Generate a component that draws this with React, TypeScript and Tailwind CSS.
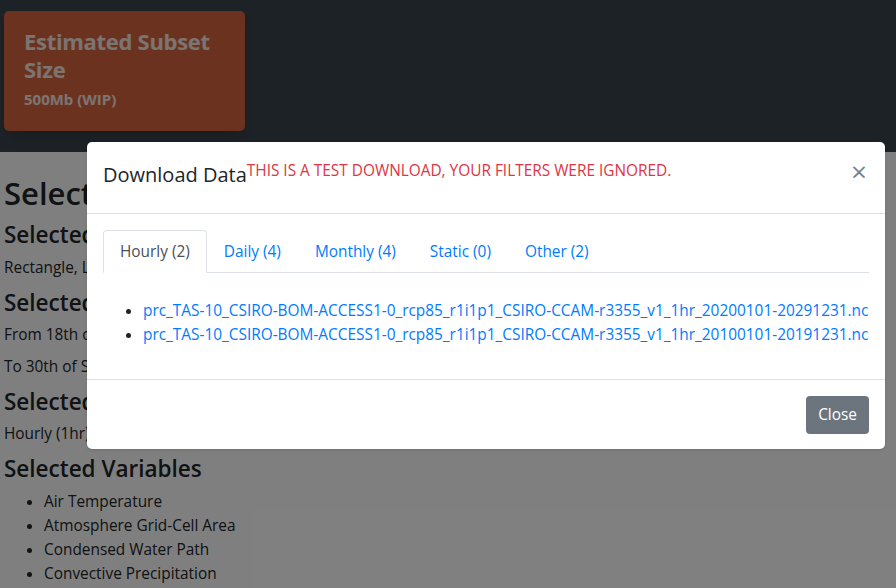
import React from "react";

const files = [
  "prc_TAS-10_CSIRO-BOM-ACCESS1-0_rcp85_r1i1p1_CSIRO-CCAM-r3355_v1_1hr_20200101-20291231.nc",
  "prc_TAS-10_CSIRO-BOM-ACCESS1-0_rcp85_r1i1p1_CSIRO-CCAM-r3355_v1_1hr_20100101-20191231.nc",
];

const tabs = ["Hourly (2)", "Daily (4)", "Monthly (4)", "Static (0)", "Other (2)"];

const variables = [
  "Air Temperature",
  "Atmosphere Grid-Cell Area",
  "Condensed Water Path",
  "Convective Precipitation",
];

export default function App() {
  return (
    <div
      className="relative w-[896px] h-[588px] overflow-hidden bg-white text-[#212529]"
      style={{ fontFamily: '"Open Sans", "Noto Sans", sans-serif' }}
    >
      {/* top bar */}
      <div className="h-[152px] bg-[#3a444f] pl-1 pt-[11px]">
        <div className="w-[241px] h-[120px] rounded-[5px] bg-[#d6663f] shadow-lg px-5 pt-[16px] text-white/85">
          <h3 className="text-[22px] leading-[28px] font-bold tracking-[-0.3px]">Estimated Subset Size</h3>
          <p className="mt-[5px] text-[15px] leading-[22px] font-bold">500Mb (WIP)</p>
        </div>
      </div>

      {/* page content */}
      <div className="pl-1 pt-[22px]">
        <h2 className="text-[31px] leading-[38px] font-semibold mb-2">Selected Filters</h2>
        <h4 className="text-[22.5px] leading-[29px] font-semibold mb-[7px]">Selected Area</h4>
        <p className="text-[15.4px] leading-[24px] mb-2">Rectangle, Lat -43.6 to -39.2, Lon 143.8 to 148.5</p>
        <h4 className="text-[22.5px] leading-[29px] font-semibold mb-[6px]">Selected Dates</h4>
        <p className="text-[15.4px] leading-[24px] mb-2">From 18th of September 2010</p>
        <p className="text-[15.4px] leading-[24px] mb-2">To 30th of September 2029</p>
        <h4 className="mt-px text-[22.5px] leading-[29px] font-semibold mb-[6px]">Selected Frequency</h4>
        <p className="text-[15.4px] leading-[24px] mb-2">Hourly (1hr)</p>
        <h4 className="mt-px text-[22.5px] leading-[29px] font-semibold mb-[7px]">Selected Variables</h4>
        <ul className="list-disc pl-10 text-[15.4px] leading-[24px]">
          {variables.map((v) => (
            <li key={v}>{v}</li>
          ))}
        </ul>
      </div>

      {/* backdrop */}
      <div className="absolute inset-0 bg-black/50" />

      {/* modal */}
      <div className="absolute left-[87px] top-[142px] w-[798px] bg-white rounded-[5px] shadow-sm">
        <div className="h-[72px] border-b border-[#dee2e6] flex items-start px-4 pt-4">
          <h5 className="mt-[2px] text-[20px] leading-[30px] font-medium text-[#212529]">
            Download Data
            <span className="relative -top-px align-top text-[15.4px] leading-[24px] font-normal text-[#dc3545]">
              THIS IS A TEST DOWNLOAD, YOUR FILTERS WERE IGNORED.
            </span>
          </h5>
          <button className="ml-auto mr-[2px] -mt-[2px] text-[28px] leading-[30px] font-normal text-black/50">
            ×
          </button>
        </div>

        <div className="px-4 pt-4 pb-4">
          <div className="flex border-b border-[#dee2e6] text-[15.4px] leading-[24px]">
            {tabs.map((t, i) => (
              <div
                key={t}
                className={
                  i === 0
                    ? "px-4 pt-[9px] pb-[7px] -mb-px border border-[#dee2e6] border-b-white rounded-t-[4px] bg-white text-[#495057]"
                    : "px-4 pt-[9px] pb-[7px] border border-transparent text-[#007bff]"
                }
              >
                {t}
              </div>
            ))}
          </div>
          <ul className="list-disc pl-10 mt-[26px] mb-4 text-[15.4px] leading-[24px]">
            {files.map((f) => (
              <li key={f}>
                <a className="text-[#007bff]">{f}</a>
              </li>
            ))}
          </ul>
        </div>

        <div className="border-t border-[#dee2e6] px-4 pt-4 pb-[15px] flex justify-end">
          <button className="h-[38px] px-3 rounded-[4px] bg-[#6c757d] text-white text-[15.4px] leading-[24px]">
            Close
          </button>
        </div>
      </div>
    </div>
  );
}
